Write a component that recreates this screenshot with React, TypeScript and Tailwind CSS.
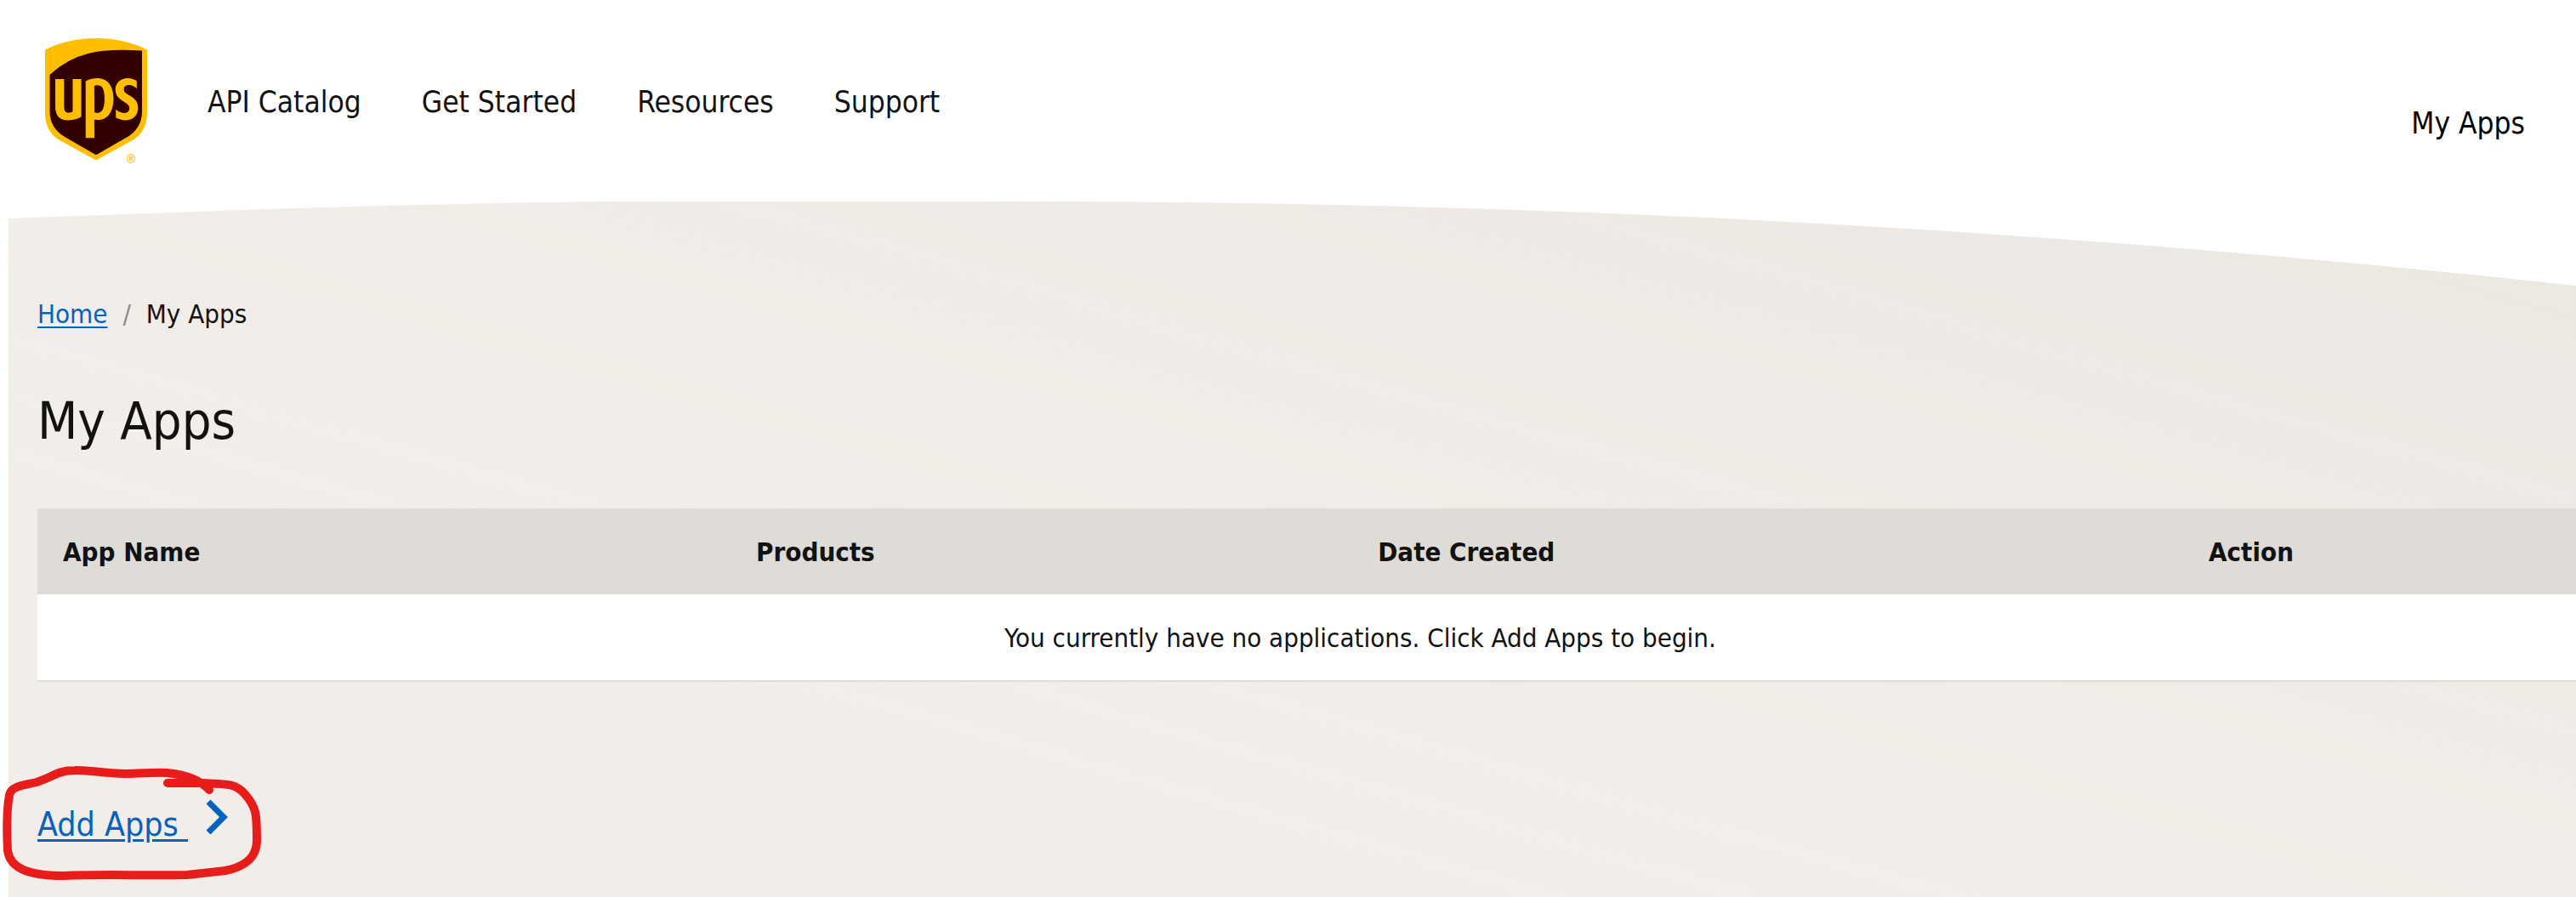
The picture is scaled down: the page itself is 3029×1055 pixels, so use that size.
import { SiUps } from 'react-icons/si';

const navItems = ['API Catalog', 'Get Started', 'Resources', 'Support'];

const columns = [
  { title: 'App Name', width: 'w-[26.2%]' },
  { title: 'Products', width: 'w-[23.5%]' },
  { title: 'Date Created', width: 'w-[31.4%]' },
  { title: 'Action', width: 'w-[18.9%]' },
];

const Logo = () => (
  <a href="#" aria-label="UPS home" className="relative block h-36 w-30">
    <svg viewBox="0 0 120 144" className="absolute inset-0 h-full w-full">
      <path d="M0 13.5 Q27 0 60 0 Q93 0 120 13.5 V86 C120 105 113 115 99 122 L60 143.5 L21 122 C7 115 0 105 0 86 Z" fill="#ffbe00" />
    </svg>
    {/* the icon paints the brown field, its lettering is cut out and shows the yellow shield */}
    <SiUps className="absolute top-0 -left-3 h-36 w-36 text-[#330000] [clip-path:path('M19_44_Q54_13_103_14.7_L125_15_V86_C125_102_118_111_105_117_L72_136_L39_117_C26_111_19_102_19_86_Z')]" />
    <svg viewBox="0 0 120 144" className="absolute inset-0 h-full w-full" fill="none" stroke="#330000" strokeWidth="3">
      <path d="M7 43.5 C34 19 62 13 112.5 16 V86 C112.5 100 105 110 94 116 L60 135.5 L26 116 C15 110 7 100 7 86 Z" />
    </svg>
    <span className="absolute right-3.5 -bottom-2 font-['Liberation_Sans',sans-serif] text-sm leading-5 font-bold text-[#ffbe00]">®</span>
  </a>
);

const Header = () => (
  <header className="flex items-center justify-between pt-[45px] pr-[60px] pb-12 pl-[53px]">
    <div className="flex items-center gap-[71px]">
      <Logo />
      <nav className="flex items-center gap-[71px] pt-1.5 text-[35px] leading-10 text-[#121212]">
        {navItems.map((item) => (
          <a key={item} href="#">{item}</a>
        ))}
      </nav>
    </div>
    <a href="#" className="pt-14 text-[35px] leading-10 text-black">My Apps</a>
  </header>
);

const AppsTable = () => (
  <div className="overflow-hidden">
    <table className="w-[calc(100%+126px)] table-fixed border-collapse text-[31px] leading-[37px]">
      <thead>
        <tr className="bg-[#dfdbd6] text-left">
          {columns.map((col) => (
            <th key={col.title} className={`${col.width} px-[30px] pt-[33px] pb-[31px] font-bold`}>{col.title}</th>
          ))}
        </tr>
      </thead>
      <tbody>
        <tr className="border-b-2 border-[#dfdbd6] bg-white">
          <td colSpan={4} className="px-[30px] pt-[33px] pb-[31px] text-center">
            You currently have no applications. Click Add Apps to begin.
          </td>
        </tr>
      </tbody>
    </table>
  </div>
);

// hand drawn marker ring around the link
const Marker = () => (
  <svg viewBox="0 0 310 140" className="pointer-events-none absolute -top-11 -left-11 h-[140px] w-[310px]" fill="none" stroke="#e71d1c" strokeWidth="10" strokeLinecap="round" strokeLinejoin="round">
    <path d="M246 33 C236 22 218 15 196 13 C180 12 165 14 148 14 C120 14 105 9 88 10 C68 10 62 18 43 24 C26 28 13 29 11 39 C7 60 8 85 9 105 C13 129 42 134 75 134 C120 132 170 134 220 133 L265 128 C294 122 302 108 302 92 C302 60 301 53 288 38 C276 24 264 27 240 25 L197 25" />
  </svg>
);

const App = () => {
  return (
    <div className="min-h-screen overflow-hidden bg-white font-['DejaVu_Sans_Condensed','Noto_Sans',sans-serif] text-[#121212]">
      <Header />
      <main className="ml-[10px] min-h-[818px] bg-[linear-gradient(16deg,#f2ede9_0%,#f2ede9_29%,#f1eee9_33%,#f2ede8_37%,#f1eee9_41%,#f1ece8_45%,#f1eee8_49%,#f1ece8_53%,#f0ede7_57%,#f0ebe7_61%,#efece6_65%,#efeae6_69%,#eeebe5_73%,#eee9e5_77%,#edeae4_81%,#ede8e4_85%,#ece9e3_90%,#ebe8e2_100%)]">
        <svg viewBox="0 0 3019 100" preserveAspectRatio="none" className="block h-[100px] w-full">
          <path d="M0 0 V20 C230 11 460 3 700 0 H1200 Q2110 0 3019 99 V0 Z" fill="#fff" />
        </svg>
        <div className="pl-[34px]">
          <nav aria-label="Breadcrumb" className="flex gap-[18px] pt-3 text-[31px] leading-10">
            <a href="#" className="text-[#0662bb] underline decoration-2 underline-offset-4">Home</a>
            <span className="text-[#8a8a8a]">/</span>
            <span>My Apps</span>
          </nav>
          <h1 className="pt-[66px] pb-[63px] text-[61px] leading-[80px]">My Apps</h1>
          <AppsTable />
          <div className="relative mt-[138px] flex w-fit items-start gap-[21px] pb-16">
            <a href="#" className="pt-1.5 text-[39px] leading-12 whitespace-pre text-[#0662bb] underline decoration-3 underline-offset-4">Add Apps </a>
            <svg viewBox="0 0 26 42" className="h-[42px] w-[26px]" fill="none" stroke="#0662bb" strokeWidth="7">
              <path d="M3 3 L21 21 L3 39" />
            </svg>
            <Marker />
          </div>
        </div>
      </main>
    </div>
  );
};

export default App;
